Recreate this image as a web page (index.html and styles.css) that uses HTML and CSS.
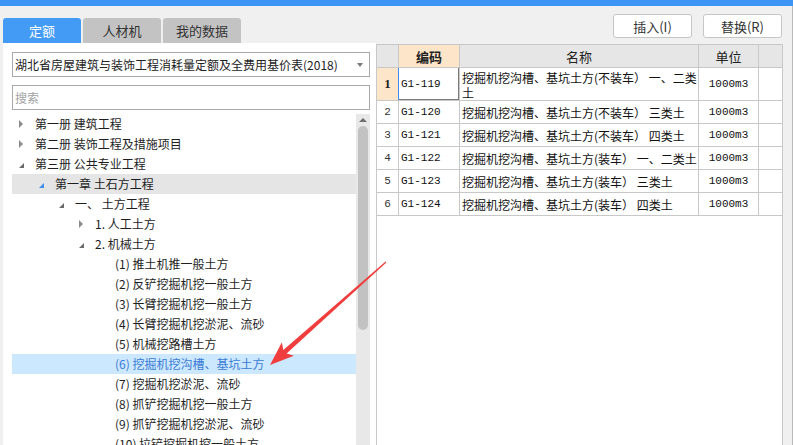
FILE: index.html
```html
<!DOCTYPE html>
<html lang="zh-CN">
<head>
<meta charset="utf-8">
<title>定额</title>
<link rel="stylesheet" href="styles.css">
</head>
<body>
<div class="topbar"></div>
<div class="main">
  <div class="left">
    <div class="tabs">
      <div class="tab active">定额</div>
      <div class="tab">人材机</div>
      <div class="tab">我的数据</div>
    </div>
    <div class="panel">
      <div class="select"><span>湖北省房屋建筑与装饰工程消耗量定额及全费用基价表(2018)</span><i class="caret"></i></div>
      <div class="search">搜索</div>
      <div class="treewrap">
        <div class="tree">
          <div class="node l0"><i class="tw c"></i>第一册 建筑工程</div>
          <div class="node l0"><i class="tw c"></i>第二册 装饰工程及措施项目</div>
          <div class="node l0"><i class="tw e"></i>第三册 公共专业工程</div>
          <div class="node l1 sel"><i class="tw e"></i>第一章 土石方工程</div>
          <div class="node l2"><i class="tw e"></i>一、 土方工程</div>
          <div class="node l3"><i class="tw c"></i>1. 人工土方</div>
          <div class="node l3"><i class="tw e"></i>2. 机械土方</div>
          <div class="node l4"><i class="tw"></i>(1) 推土机推一般土方</div>
          <div class="node l4"><i class="tw"></i>(2) 反铲挖掘机挖一般土方</div>
          <div class="node l4"><i class="tw"></i>(3) 长臂挖掘机挖一般土方</div>
          <div class="node l4"><i class="tw"></i>(4) 长臂挖掘机挖淤泥、流砂</div>
          <div class="node l4"><i class="tw"></i>(5) 机械挖路槽土方</div>
          <div class="node l4 hot"><i class="tw"></i>(6) 挖掘机挖沟槽、基坑土方</div>
          <div class="node l4"><i class="tw"></i>(7) 挖掘机挖淤泥、流砂</div>
          <div class="node l4"><i class="tw"></i>(8) 抓铲挖掘机挖一般土方</div>
          <div class="node l4"><i class="tw"></i>(9) 抓铲挖掘机挖淤泥、流砂</div>
          <div class="node l4"><i class="tw"></i>(10) 拉铲挖掘机挖一般土方</div>
        </div>
        <div class="vscroll">
          <div class="up"><i></i></div>
          <div class="thumb"></div>
        </div>
      </div>
    </div>
  </div>
  <div class="right">
    <div class="btnbar">
      <div class="btn">插入(I)</div>
      <div class="btn">替换(R)</div>
    </div>
    <div class="grid">
      <div class="row head">
        <div class="cell"></div>
        <div class="cell hl">编码</div>
        <div class="cell">名称</div>
        <div class="cell">单位</div>
        <div class="cell"></div>
      </div>
      <div class="row row1">
        <div class="cell num">1</div>
        <div class="cell code focus">G1-119</div>
        <div class="cell name wrap"><span class="ln">挖掘机挖沟槽、基坑土方(不装车） 一、二类</span><span class="ln">土</span></div>
        <div class="cell unit">1000m3</div>
        <div class="cell"></div>
      </div>
      <div class="row">
        <div class="cell num">2</div>
        <div class="cell code">G1-120</div>
        <div class="cell name">挖掘机挖沟槽、基坑土方(不装车） 三类土</div>
        <div class="cell unit">1000m3</div>
        <div class="cell"></div>
      </div>
      <div class="row">
        <div class="cell num">3</div>
        <div class="cell code">G1-121</div>
        <div class="cell name">挖掘机挖沟槽、基坑土方(不装车） 四类土</div>
        <div class="cell unit">1000m3</div>
        <div class="cell"></div>
      </div>
      <div class="row">
        <div class="cell num">4</div>
        <div class="cell code">G1-122</div>
        <div class="cell name">挖掘机挖沟槽、基坑土方(装车） 一、二类土</div>
        <div class="cell unit">1000m3</div>
        <div class="cell"></div>
      </div>
      <div class="row">
        <div class="cell num">5</div>
        <div class="cell code">G1-123</div>
        <div class="cell name">挖掘机挖沟槽、基坑土方(装车） 三类土</div>
        <div class="cell unit">1000m3</div>
        <div class="cell"></div>
      </div>
      <div class="row">
        <div class="cell num">6</div>
        <div class="cell code">G1-124</div>
        <div class="cell name">挖掘机挖沟槽、基坑土方(装车） 四类土</div>
        <div class="cell unit">1000m3</div>
        <div class="cell"></div>
      </div>
    </div>
  </div>
</div>
<svg class="arrow" width="793" height="445" viewBox="0 0 793 445">
  <polygon points="270,365 281.9,342.3 283.3,349.9 385.6,261.6 386.4,262.4 286.6,353.6 293.9,355.8" fill="#f03e3e"/>
</svg>
</body>
</html>
```
FILE: styles.css
```css
html, body {
  margin: 0;
  padding: 0;
}
body {
  width: 793px;
  height: 445px;
  overflow: hidden;
  position: relative;
  background: #f0f0f0;
  font-family: "Noto Sans CJK SC", "Microsoft YaHei", sans-serif;
  font-size: 12px;
  color: #1e1e1e;
}
.topbar {
  height: 6px;
  background: #3d95f5;
}
.main {
  display: flex;
  height: 439px;
  box-shadow: inset -1px 0 0 #b9b9b9;
}
.left {
  margin-left: 3px;
  width: 373px;
  padding-top: 12px;
  display: flex;
  flex-direction: column;
}
.tabs {
  display: flex;
  gap: 2px;
  height: 25px;
  flex: none;
}
.tab {
  width: 78px;
  background: #c3c3c3;
  border-radius: 3px 3px 0 0;
  display: flex;
  align-items: center;
  justify-content: center;
  font-size: 13px;
  color: #333;
}
.tab.active {
  background: #449bf5;
  color: #fff;
}
.panel {
  flex: 1;
  min-height: 0;
  background: #fff;
  padding: 9px 6px 0 9px;
  display: flex;
  flex-direction: column;
  overflow: hidden;
}
.select, .search {
  height: 25px;
  flex: none;
  box-sizing: border-box;
  border: 1px solid #a9a9a9;
  display: flex;
  align-items: center;
  padding-left: 2px;
  white-space: nowrap;
}
.select {
  color: #222;
}
.caret {
  margin-left: auto;
  margin-right: 6px;
  width: 0;
  height: 0;
  border-top: 4px solid #7a7a7a;
  border-left: 3.5px solid transparent;
  border-right: 3.5px solid transparent;
}
.search {
  margin-top: 8px;
  color: #a3a3a3;
}
.treewrap {
  margin-top: 4px;
  flex: 1;
  min-height: 0;
  display: flex;
}
.tree {
  width: 344px;
  overflow: hidden;
}
.node {
  height: 20px;
  line-height: 20px;
  display: flex;
  align-items: center;
  white-space: nowrap;
  color: #1e1e1e;
}
.l0 { padding-left: 7px; }
.l1 { padding-left: 27px; }
.l2 { padding-left: 47px; }
.l3 { padding-left: 67px; }
.l4 { padding-left: 87px; }
.node.sel {
  background: #e5e5e5;
}
.node.hot {
  background: #cce8ff;
  color: #3a7bd5;
}
.tw {
  width: 16px;
  height: 20px;
  flex: none;
  display: flex;
  align-items: center;
}
.tw.c::before {
  content: "";
  width: 0;
  height: 0;
  border-left: 4px solid #8c8c8c;
  border-top: 4px solid transparent;
  border-bottom: 4px solid transparent;
}
.tw.e::before {
  content: "";
  width: 0;
  height: 0;
  margin-top: 3px;
  border-bottom: 5px solid #6a6a6a;
  border-left: 5px solid transparent;
}
.sel .tw.e::before {
  border-bottom-color: #3d8ee8;
}
.vscroll {
  width: 14px;
  background: #e8e8e8;
  display: flex;
  flex-direction: column;
  align-items: center;
}
.up {
  height: 11px;
  width: 14px;
  display: flex;
  align-items: center;
  justify-content: center;
}
.up i {
  width: 0;
  height: 0;
  border-bottom: 4px solid #6e6e6e;
  border-left: 4px solid transparent;
  border-right: 4px solid transparent;
}
.thumb {
  margin-top: 1px;
  width: 10px;
  height: 204px;
  border-radius: 5px;
  background: #c2c2c2;
}
.right {
  width: 407px;
  padding-top: 8px;
  display: flex;
  flex-direction: column;
}
.btnbar {
  display: flex;
  justify-content: flex-end;
  gap: 11px;
  padding-right: 1px;
  height: 24px;
  flex: none;
}
.btn {
  width: 79px;
  height: 24px;
  box-sizing: border-box;
  border: 1px solid #c6c6c6;
  border-radius: 3px;
  background: #fff;
  font-size: 13px;
  color: #333;
  display: flex;
  align-items: center;
  justify-content: center;
}
.grid {
  margin-top: 6px;
  flex: 1;
  background: #fff;
  border: 1px solid #c8c8c8;
  border-bottom: none;
}
.row {
  display: grid;
  grid-template-columns: 22px 61px 239px 60px 23px;
  height: 23px;
  box-sizing: border-box;
  border-bottom: 1px solid #c8c8c8;
}
.cell {
  box-sizing: border-box;
  border-right: 1px solid #c8c8c8;
  display: flex;
  align-items: center;
  overflow: hidden;
  white-space: nowrap;
}
.cell:last-child {
  border-right: none;
}
.head .cell {
  background: #e6e6e6;
  justify-content: center;
  font-size: 13px;
  color: #222;
}
.head .cell.hl {
  background: #fde5c9;
  font-weight: bold;
}
.num {
  justify-content: center;
  font-family: "Liberation Mono", monospace;
  font-size: 11px;
  color: #333;
}
.code {
  padding-left: 2px;
  font-family: "Liberation Mono", monospace;
  font-size: 11px;
  color: #111;
}
.name {
  padding-left: 2px;
  color: #111;
}
.unit {
  justify-content: center;
  font-family: "Liberation Mono", monospace;
  font-size: 11px;
  color: #111;
}
.row1 {
  height: 33px;
}
.row1 .num {
  background: #fde5c9;
  font-family: "Liberation Serif", serif;
  font-weight: bold;
  font-size: 13px;
  color: #222;
  border-right-color: #3b8ff0;
}
.code.focus {
  box-shadow: inset -1px -1px 0 #7a7a7a;
}
.name.wrap {
  flex-direction: column;
  align-items: flex-start;
  justify-content: center;
  padding-top: 1px;
}
.ln {
  display: block;
  height: 15px;
  line-height: 15px;
}
.arrow {
  position: absolute;
  left: 0;
  top: 0;
  pointer-events: none;
}
```
